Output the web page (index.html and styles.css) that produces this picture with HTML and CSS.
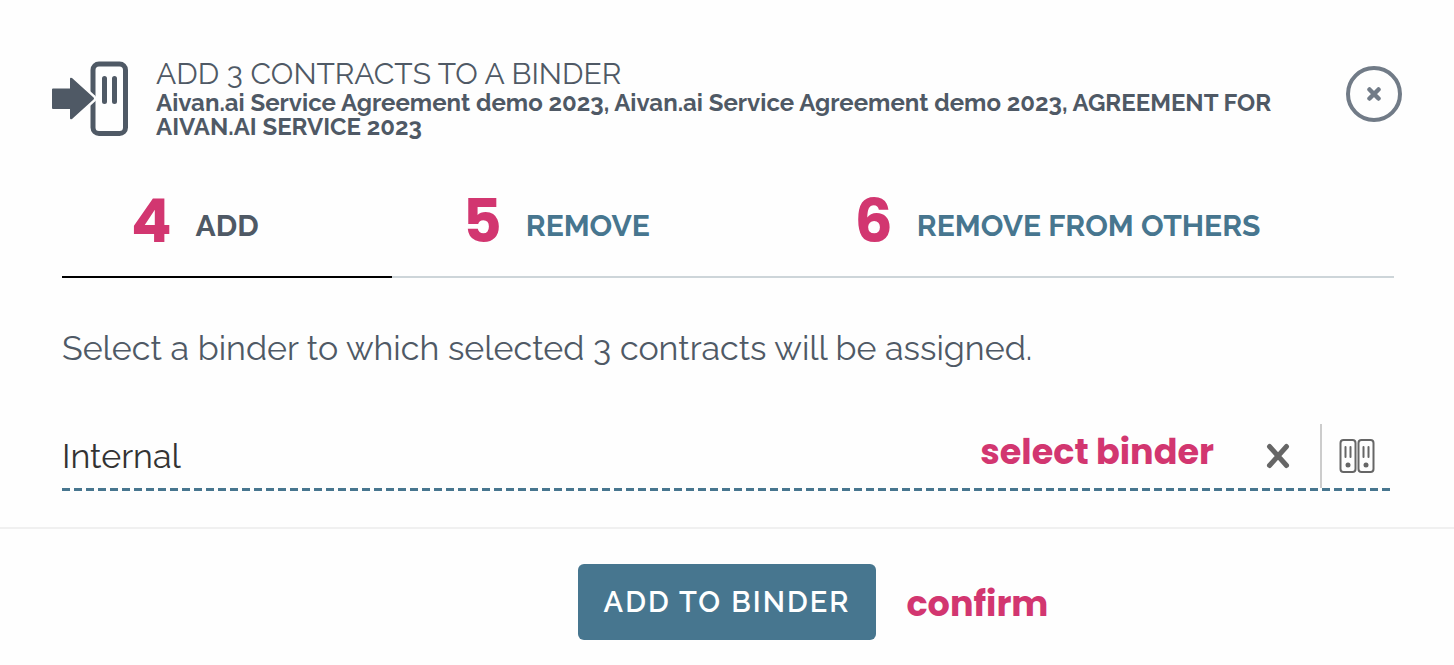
FILE: index.html
```
<!DOCTYPE html>
<html lang="en">
<head>
  <meta charset="UTF-8">
  <meta name="viewport" content="width=device-width, initial-scale=1.0">
  <title>Add contracts to a binder</title>
  <link rel="stylesheet" href="styles.css">
</head>
<body>
  <main class="dialog">
    <header class="dialog-header">
      <svg class="header-icon" width="78" height="76" viewBox="0 0 78 76" aria-hidden="true">
        <rect x="41" y="4" width="32.500" height="69.500" rx="6" fill="none" stroke="currentColor" stroke-width="5"/>
        <path d="M52.500 18.500v23M62.500 18.500v23" fill="none" stroke="currentColor" stroke-width="5" stroke-linecap="round"/>
        <path d="M1 28.500h17V19q0-2 2-1l21 19q2 1.500 0 3L20 59q-2 1-2-1v-9H1q-1 0-1-1V29.500q0-1 1-1z" fill="currentColor" stroke="#fefefe" stroke-width="5" paint-order="stroke"/>
      </svg>
      <div class="header-text">
        <h1>ADD 3 CONTRACTS TO A BINDER</h1>
        <p>Aivan.ai Service Agreement demo 2023, Aivan.ai Service Agreement demo 2023, AGREEMENT FOR AIVAN.AI SERVICE 2023</p>
      </div>
      <button type="button" class="close-button" aria-label="Close">
        <svg width="14" height="14" viewBox="0 0 14 14" aria-hidden="true">
          <path d="M2.500 2.500l9 9M11.500 2.500l-9 9" stroke="currentColor" stroke-width="4.500" stroke-linecap="round"/>
        </svg>
      </button>
    </header>

    <nav class="tabs">
      <button type="button" class="tab active"><span class="tab-label"><span class="note step">4</span>ADD</span></button>
      <button type="button" class="tab"><span class="tab-label"><span class="note step">5</span>REMOVE</span></button>
      <button type="button" class="tab"><span class="tab-label"><span class="note step">6</span>REMOVE FROM OTHERS</span></button>
    </nav>

    <form class="binder-form" id="binderForm">
      <label for="binder">Select a binder to which selected 3 contracts will be assigned.</label>
      <div class="field">
        <input type="text" id="binder" name="binder" value="Internal">
        <span class="note field-note">select binder</span>
        <button type="button" class="icon-button clear-button" aria-label="Clear">
          <svg width="24" height="26" viewBox="0 0 24 26" aria-hidden="true">
            <path d="M3.500 3.500l17 19M20.500 3.500l-17 19" stroke="currentColor" stroke-width="5" stroke-linecap="round"/>
          </svg>
        </button>
        <button type="button" class="icon-button browse-button" aria-label="Browse binders">
          <svg width="36" height="36" viewBox="0 0 36 36" aria-hidden="true">
            <g fill="none" stroke="currentColor" stroke-width="2">
              <rect x="1.500" y="2" width="15" height="32" rx="3"/>
              <rect x="19.500" y="2" width="15" height="32" rx="3"/>
              <path d="M6.500 9v10M11.500 9v10M24.500 9v10M29.500 9v10" stroke-linecap="round"/>
            </g>
            <circle cx="9" cy="27" r="2.500" fill="currentColor"/>
            <circle cx="27" cy="27" r="2.500" fill="currentColor"/>
          </svg>
        </button>
      </div>
    </form>

    <footer class="dialog-footer">
      <div class="submit-wrap">
        <button type="submit" form="binderForm" class="submit-button">ADD TO BINDER</button>
        <span class="note confirm-note">confirm</span>
      </div>
    </footer>
  </main>
</body>
</html>
```
FILE: styles.css
```
:root {
  --text-color: #4f5965;
  --link-color: #47768f;
  --note-color: #d23670;
  --icon-color: #666;
}

* {
  box-sizing: border-box;
}

body {
  margin: 0;
  font-family: Raleway, Lato, sans-serif;
  color: var(--text-color);
  background-color: #fefefe;
}

button {
  padding: 0;
  border: none;
  background: none;
  font-family: inherit;
  color: inherit;
  cursor: pointer;
}

svg {
  display: block;
}

/* Header */
.dialog-header {
  display: flex;
  align-items: flex-start;
  padding: 60px 52px 0;
}

.header-icon {
  flex: none;
  margin-right: 26px;
}

.header-text {
  flex: 1;
}

h1 {
  margin: 0 0 3px;
  font-size: 30px;
  line-height: 28px;
  font-weight: 400;
}

.header-text p {
  margin: 0;
  font-size: 24px;
  line-height: 24px;
  font-weight: bold;
}

.close-button {
  flex: none;
  display: flex;
  align-items: center;
  justify-content: center;
  width: 56px;
  height: 56px;
  margin: 6px 0 0 70px;
  border: 4px solid #717b87;
  border-radius: 50%;
  color: #717b87;
}

/* Tabs */
.tabs {
  display: flex;
  margin: 35px 60px 0 62px;
  border-bottom: 2px solid #cdd5d9;
}

.tab {
  flex: 1 1 auto;
  height: 104px;
  margin-bottom: -2px;
  border-bottom: 2px solid transparent;
  font-size: 30px;
  font-weight: bold;
  color: var(--link-color);
}

.tab.active {
  color: var(--text-color);
  border-bottom-color: #000;
}

.tab-label {
  position: relative;
  padding: 0 130px;
}

/* Guide notes */
.note {
  font-family: Poppins, Inter, sans-serif;
  font-size: 35px;
  line-height: 40px;
  font-weight: bold;
  color: var(--note-color);
  white-space: nowrap;
}

.step {
  position: absolute;
  right: calc(100% - 106px);
  bottom: 2px;
  font-size: 60px;
}

/* Binder form */
.binder-form {
  padding: 50px 64px 36px 62px;
}

.binder-form label {
  display: block;
  font-size: 34px;
  line-height: 40px;
  font-weight: 400;
}

.field {
  display: flex;
  align-items: center;
  height: 67px;
  margin-top: 56px;
  padding-bottom: 3px;
  background: repeating-linear-gradient(to right, var(--link-color) 0 8px, transparent 8px 12px) bottom / 100% 3px no-repeat;
}

.field input {
  flex: 1;
  min-width: 0;
  padding: 0;
  border: none;
  outline: none;
  background: none;
  font-family: inherit;
  font-size: 34px;
  font-weight: 400;
  color: #333;
}

.field-note {
  padding-bottom: 8px;
}

.icon-button {
  display: flex;
  align-items: center;
  justify-content: center;
  height: 64px;
  color: var(--icon-color);
}

.clear-button {
  width: 84px;
  margin-left: 22px;
}

.browse-button {
  width: 70px;
  padding-left: 2px;
  border-left: 2px solid #ccc;
}

/* Footer */
.dialog-footer {
  display: flex;
  justify-content: center;
  padding: 35px 0 26px;
  border-top: 2px solid #f0f0f0;
}

.submit-wrap {
  position: relative;
}

.submit-button {
  height: 76px;
  padding: 0 26px;
  border-radius: 6px;
  background-color: var(--link-color);
  font-size: 29px;
  font-weight: 600;
  letter-spacing: 2px;
  color: #fff;
}

.confirm-note {
  position: absolute;
  left: calc(100% + 30px);
  top: 20px;
}
```
